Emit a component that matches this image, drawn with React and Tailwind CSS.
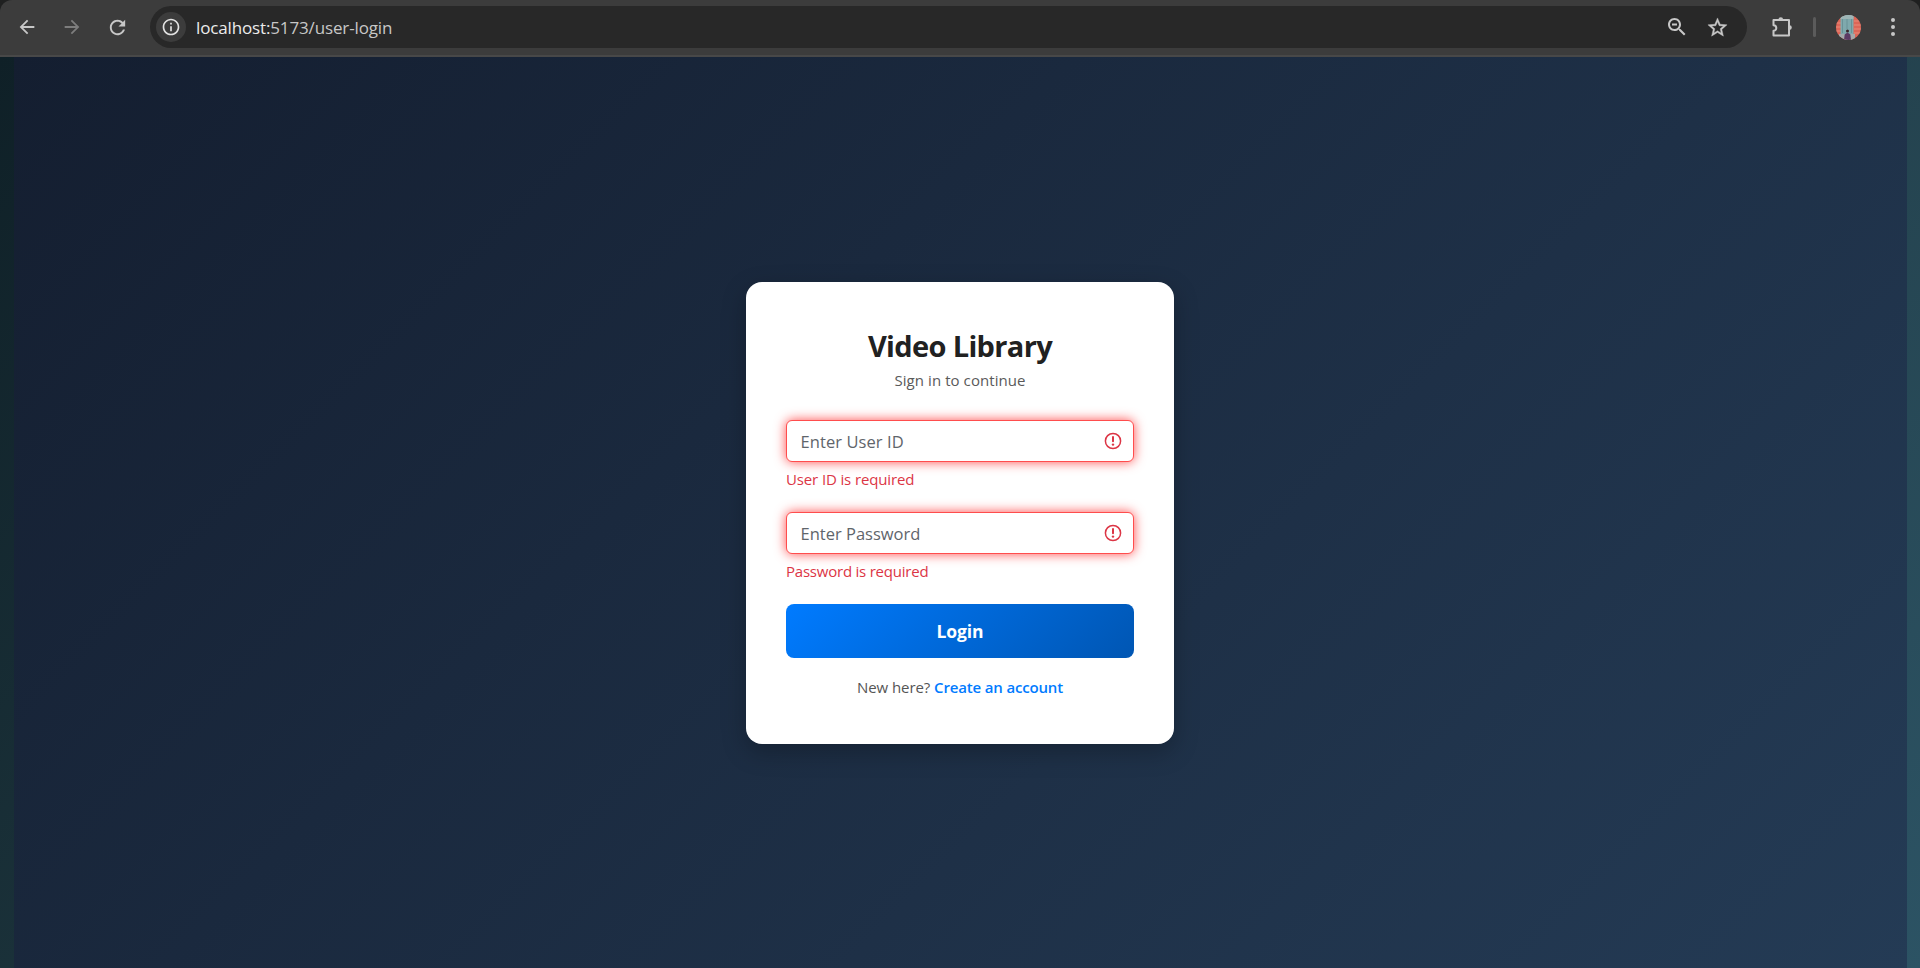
const ui = "font-['Open_Sans','Noto_Sans',sans-serif]";

function Icon({ size, path, className = "", box = "0 0 24 24" }) {
  return (
    <svg width={size} height={size} viewBox={box} fill="currentColor" className={`block shrink-0 ${className}`}>
      <path d={path} />
    </svg>
  );
}

const ARROW_BACK = "M20 11H7.83l5.59-5.59L12 4l-8 8 8 8 1.41-1.41L7.83 13H20v-2z";
const ARROW_FORWARD = "M12 4l-1.41 1.41L16.17 11H4v2h12.17l-5.58 5.59L12 20l8-8z";
const RELOAD = "M17.65 6.35C16.2 4.9 14.21 4 12 4c-4.42 0-7.99 3.58-7.99 8s3.57 8 7.99 8c3.73 0 6.84-2.55 7.73-6h-2.08c-.82 2.33-3.04 4-5.65 4-3.31 0-6-2.69-6-6s2.69-6 6-6c1.66 0 3.14.69 4.22 1.78L13 11h7V4l-2.35 2.35z";
const INFO = "M11 7h2v2h-2zm0 4h2v6h-2zm1-9C6.48 2 2 6.48 2 12s4.48 10 10 10 10-4.48 10-10S17.52 2 12 2zm0 18c-4.41 0-8-3.59-8-8s3.59-8 8-8 8 3.59 8 8-3.59 8-8 8z";
const ZOOM_OUT = "M15.5 14h-.79l-.28-.27C15.41 12.59 16 11.11 16 9.5 16 5.91 13.09 3 9.5 3S3 5.91 3 9.5 5.91 16 9.5 16c1.61 0 3.09-.59 4.23-1.57l.27.28v.79l5 4.99L20.49 19l-4.99-5zm-6 0C7.01 14 5 11.99 5 9.5S7.01 5 9.5 5 14 7.01 14 9.5 11.99 14 9.5 14zM7 8.500h5v2H7z";
const STAR = "M22 9.24l-7.19-.62L12 2 9.19 8.63 2 9.24l5.46 4.73L5.82 21 12 17.27 18.18 21l-1.63-7.03L22 9.24zM12 15.4l-3.76 2.27 1-4.28-3.32-2.88 4.38-.38L12 6.1l1.71 4.04 4.38.38-3.32 2.88 1 4.28L12 15.4z";

function Avatar() {
  return (
    <svg width="25" height="25" viewBox="0 0 25 25" className="block shrink-0">
      <defs>
        <clipPath id="avatar-clip"><circle cx="12.5" cy="12.5" r="12.5" /></clipPath>
      </defs>
      <g clipPath="url(#avatar-clip)">
        <rect width="25" height="25" fill="#dd6657" />
        <path d="M0 8h5M0 12h5M0 16h5M18 6h7M18 10h7M18 14h7M18 18h7" stroke="#e88a7b" strokeWidth="1" />
        <rect x="4.500" width="13" height="22" fill="#7fa9ad" />
        <rect x="4.500" width="13" height="4" fill="#9db5b6" />
        <path d="M6.500 4v14M11 4v10M15.500 4v14" stroke="#6a9297" strokeWidth="1" />
        <rect x="3" y="19" width="16" height="6" fill="#a3a9aa" />
        <circle cx="11.500" cy="16" r="1.500" fill="#3a2529" />
        <path d="M8 25l.7-5.500 2.800-2 2.800 2 .7 5.500z" fill="#5b3a63" />
      </g>
    </svg>
  );
}

function BrowserBar() {
  return (
    <div className="h-[57px] bg-[#1f2020]">
      <header className="flex h-[57px] items-start rounded-t-xl border-b-2 border-[#484848] bg-[#3c3c3c] pt-1.5 text-[#c7c7c7]">
        <div className="flex h-[42px] items-center">
          <Icon size={22} path={ARROW_BACK} className="ml-[16px]" />
          <Icon size={22} path={ARROW_FORWARD} className="ml-[23px] text-[#7d7d7d]" />
          <Icon size={23} path={RELOAD} className="ml-[23px]" />
        </div>
        <div className="ml-[21px] flex h-[42px] w-[1597px] items-center rounded-full bg-[#282828] pl-1.5">
          <span className="flex size-[30px] items-center justify-center rounded-full bg-[#3c3c3c] text-[#e3e3e3]">
            <Icon size={20} path={INFO} />
          </span>
          <p className={`ml-[10px] pt-px text-[17px] leading-6 tracking-[-0.14px] whitespace-nowrap text-[#c7c7c7] ${ui}`}>
            <span className="text-[#ececec]">localhost:</span>5173/user-login
          </p>
          <Icon size={24} path={ZOOM_OUT} className="ml-auto" />
          <Icon size={23} path={STAR} className="mr-[18px] ml-[17px] stroke-current stroke-[0.4]" />
        </div>
        <div className="flex h-[42px] items-center">
          <svg width="24" height="24" viewBox="0 0 24 24" fill="none" stroke="currentColor" strokeWidth="2" strokeLinejoin="round" className="ml-[22.5px] block">
            <path d="M3.500 5H19v15.500H3.500v-4.700a2.800 2.800 0 0 0 0-5.600z" />
            <path d="M8.500 4.500a2.300 2.300 0 0 1 4.600 0zM19.500 10.300a2.300 2.300 0 0 1 0 4.600z" fill="currentColor" stroke="none" />
          </svg>
          <span className="ml-[19px] h-5 w-[3px] rounded-full bg-[#5b5b5b]" />
          <span className="ml-5"><Avatar /></span>
          <svg width="6" height="20" viewBox="0 0 6 20" fill="currentColor" className="ml-[29px] block">
            <circle cx="3" cy="3" r="2" /><circle cx="3" cy="10" r="2" /><circle cx="3" cy="17" r="2" />
          </svg>
        </div>
      </header>
    </div>
  );
}

function Field({ placeholder, error, tracking, errorTracking }) {
  return (
    <div className="h-[92px]">
      <div className="flex h-[42px] items-center justify-between rounded-md border border-[#ff4d4d] bg-white pr-[11px] pl-[13.5px] shadow-[0_0_12px_#ff4d4d]">
        <span className={`pt-px text-[16.5px] leading-6 whitespace-nowrap text-[#5f656b] ${tracking}`}>{placeholder}</span>
        <svg width="18" height="18" viewBox="0 0 18 18" fill="none" stroke="#dc3545" className="block">
          <circle cx="9" cy="9" r="7.600" strokeWidth="1.500" />
          <path d="M9 5v4.300" strokeWidth="2" strokeLinecap="round" />
          <circle cx="9" cy="12.600" r="1.200" fill="#dc3545" stroke="none" />
        </svg>
      </div>
      <p className={`mt-[5px] text-[15px] leading-6 whitespace-nowrap text-[#dc3545] ${errorTracking}`}>{error}</p>
    </div>
  );
}

export default function App() {
  return (
    <div className={`flex h-[968px] w-full flex-col overflow-hidden ${ui}`}>
      <BrowserBar />
      <div className="flex-1 bg-[linear-gradient(135deg,#0f2027,#203a43,#2c5364)] pr-[13px] pl-[14px]">
        <main className="flex h-full items-start justify-center bg-[linear-gradient(135deg,#141e30,#243b55)] pt-[225px] pr-px">
          <section className="h-[462px] w-[428px] rounded-2xl bg-white px-10 pt-11 shadow-[0_8px_24px_rgba(0,0,0,0.25)]">
            <h1 className="text-center text-[29px] leading-10 font-bold tracking-[-0.65px] text-[#212121]">Video Library</h1>
            <p className="mt-0.5 text-center text-[15px] leading-6 tracking-[0.07px] text-[#5a5a5a]">Sign in to continue</p>
            <div className="mt-[28px]">
              <Field placeholder="Enter User ID" error="User ID is required" tracking="tracking-[0.08px]" errorTracking="tracking-[-0.13px]" />
              <Field placeholder="Enter Password" error="Password is required" tracking="tracking-[0px]" errorTracking="tracking-[-0.22px]" />
            </div>
            <button className="block h-[54px] w-full rounded-lg bg-[linear-gradient(135deg,#007bff,#0056b3)] text-[17.5px] font-bold tracking-[-0.1px] text-white">Login</button>
            <p className="mt-[17px] text-center text-[15px] leading-6 tracking-[-0.07px] whitespace-nowrap text-[#555]">
              New here? <a className="font-semibold tracking-[-0.16px] text-[#007bff]">Create an account</a>
            </p>
          </section>
        </main>
      </div>
    </div>
  );
}
